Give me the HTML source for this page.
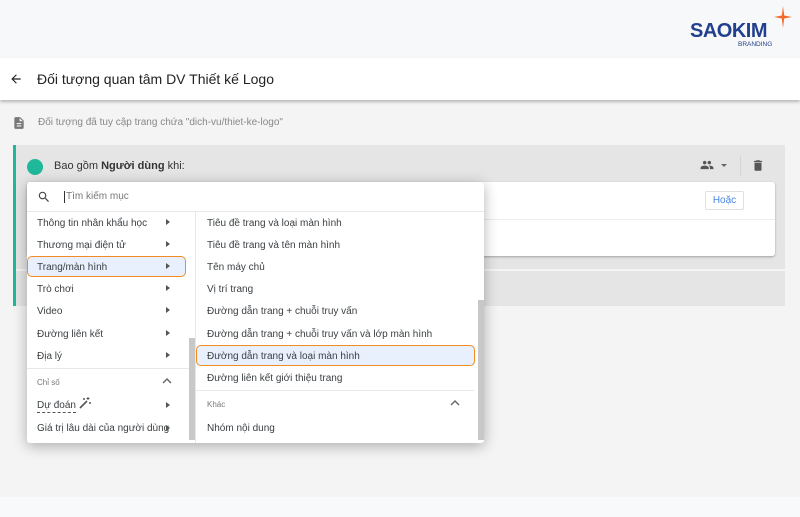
<!DOCTYPE html><html><head><meta charset="utf-8"><style>
*{margin:0;padding:0;box-sizing:border-box}
body{width:800px;height:517px;overflow:hidden;background:#f4f4f4;font-family:"Liberation Sans",Arial,sans-serif;position:relative;color:#3c4043}
.a{position:absolute}
.row{position:absolute;font-size:10px;color:#3c4043;white-space:nowrap;line-height:12px;margin-top:2px}
.tri{position:absolute;width:0;height:0;border-top:3.5px solid transparent;border-bottom:3.5px solid transparent;border-left:4px solid #555}
</style></head><body>
<div class="a" style="left:0;top:0;width:800px;height:58px;background:#f7f8f9"></div>
<div class="a" style="left:690px;top:21px;font-size:20px;line-height:20px;font-weight:bold;color:#23408e;letter-spacing:-0.5px">SAOKIM</div>
<div class="a" style="left:738px;top:41px;font-size:6.5px;color:#23408e">BRANDING</div>
<svg class="a" style="left:774px;top:6px" width="18" height="22" viewBox="0 0 18 22"><path d="M9 0 L10.2 9.5 L18 11 L10.2 12.5 L9 22 L7.8 12.5 L0 11 L7.8 9.5Z" fill="#f26b2a"/></svg>
<div class="a" style="left:0;top:58px;width:800px;height:42px;background:#fff;box-shadow:0 2px 3px rgba(0,0,0,.25)"></div>
<svg class="a" style="left:9px;top:72px" width="14" height="14" viewBox="0 0 24 24"><path d="M20 11H7.8l5.6-5.6L12 4l-8 8 8 8 1.4-1.4L7.8 13H20z" fill="#222"/></svg>
<div class="a" style="left:37px;top:71px;font-size:14px;color:#222">Đối tượng quan tâm DV Thiết kế Logo</div>
<svg class="a" style="left:12px;top:115px" width="14" height="16" viewBox="0 0 24 24"><path d="M14 2H6c-1.1 0-2 .9-2 2v16c0 1.1.9 2 2 2h12c1.1 0 2-.9 2-2V8l-6-6zm2 16H8v-2h8v2zm0-4H8v-2h8v2zm-3-5V3.5L18.5 9H13z" fill="#777"/></svg>
<div class="a" style="left:38px;top:117px;font-size:10px;color:#888">Đối tượng đã tuy cập trang chứa "dich-vu/thiet-ke-logo"</div>
<div class="a" style="left:13px;top:145px;width:772px;height:161px;background:#e5e5e5;border-left:3px solid #1fb89a"></div>
<div class="a" style="left:16px;top:269px;width:769px;height:2px;background:#f4f4f4"></div>
<div class="a" style="left:27px;top:159px;width:16px;height:16px;border-radius:50%;background:#1fb89a"></div>
<div class="a" style="left:54px;top:160px;font-size:11px;color:#333">Bao gồm <b>Người dùng</b> khi:</div>
<svg class="a" style="left:699px;top:158px" width="16" height="14" viewBox="0 0 24 24"><path d="M16 11c1.7 0 3-1.300 3-3s-1.3-3-3-3-3 1.3-3 3 1.3 3 3 3zm-8 0c1.7 0 3-1.3 3-3S9.7 5 8 5 5 6.3 5 8s1.3 3 3 3zm0 2c-2.3 0-7 1.2-7 3.5V19h14v-2.5C15 14.2 10.3 13 8 13zm8 0c-.3 0-.6 0-1 .1 1.2.8 2 2 2 3.4V19h6v-2.5c0-2.3-4.7-3.5-7-3.5z" fill="#555"/></svg>
<div class="a" style="left:721px;top:164px;border-left:3px solid transparent;border-right:3px solid transparent;border-top:3px solid #666"></div>
<div class="a" style="left:740px;top:156px;width:1px;height:20px;background:#d5d5d5"></div>
<svg class="a" style="left:751px;top:158px" width="14" height="15" viewBox="0 0 24 24"><path d="M6 19c0 1.1.9 2 2 2h8c1.1 0 2-.9 2-2V7H6v12zM19 4h-3.5l-1-1h-5l-1 1H5v2h14V4z" fill="#555"/></svg>
<div class="a" style="left:27px;top:182px;width:748px;height:74px;background:#fff;border-radius:3px;box-shadow:0 1px 2px rgba(0,0,0,.3)"></div>
<div class="a" style="left:27px;top:219px;width:748px;height:1px;background:#eee"></div>
<div class="a" style="left:705px;top:191px;width:39px;height:19px;border:1px solid #e0e0e0;border-radius:2px;font-size:10px;color:#4a86e8;text-align:center;line-height:17px;background:#fff">Hoặc</div>
<div class="a" style="left:27px;top:182px;width:457px;height:261px;background:#fff;border-radius:3px;box-shadow:0 3px 14px rgba(0,0,0,.3)"></div>
<svg class="a" style="left:37px;top:190px" width="14" height="14" viewBox="0 0 24 24"><path d="M15.5 14h-.8l-.3-.3c1-1.1 1.6-2.6 1.6-4.2a6.5 6.5 0 1 0-6.5 6.5c1.6 0 3.1-.6 4.2-1.6l.3.3v.8l5 5 1.5-1.5-5-5zm-6 0C7 14 5 12 5 9.5S7 5 9.5 5 14 7 14 9.5 12 14 9.5 14z" fill="#444"/></svg>
<div class="a" style="left:64px;top:191px;width:1px;height:12px;background:#333"></div>
<div class="a" style="left:66px;top:191px;font-size:10px;color:#777">Tìm kiếm mục</div>
<div class="a" style="left:27px;top:211px;width:457px;height:1px;background:#e8e8e8"></div>
<div class="a" style="left:195px;top:212px;width:1px;height:231px;background:#e8e8e8"></div>
<div class="a" style="left:189px;top:338px;width:6px;height:102px;background:#c8c8c8"></div>
<div class="a" style="left:478px;top:300px;width:6px;height:140px;background:#c8c8c8"></div>
<div class="a" style="left:27px;top:256px;width:159px;height:21px;background:#e8f0fe;border:1px solid #f28b22;border-radius:5px"></div>
<div class="a" style="left:196px;top:345px;width:279px;height:21px;background:#e8f0fe;border:1px solid #f28b22;border-radius:5px"></div>
<div class="row" style="left:37px;top:216px">Thông tin nhân khẩu học</div>
<div class="row" style="left:37px;top:238px">Thương mại điện tử</div>
<div class="row" style="left:37px;top:260px">Trang/màn hình</div>
<div class="row" style="left:37px;top:282px">Trò chơi</div>
<div class="row" style="left:37px;top:304px">Video</div>
<div class="row" style="left:37px;top:327px">Đường liên kết</div>
<div class="row" style="left:37px;top:349px">Địa lý</div>
<div class="a" style="left:27px;top:368px;width:162px;height:1px;background:#e8e8e8"></div>
<div class="row" style="left:37px;top:375px;font-size:8px;color:#777">Chỉ số</div>
<div class="row" style="left:37px;top:398px;border-bottom:1px dashed #555">Dự đoán</div>
<svg class="a" style="left:79px;top:397px" width="12" height="12" viewBox="0 0 12 12"><path d="M1 11L8 4" stroke="#555" stroke-width="1.6"/><path d="M9 0v3M7.5 1.5h3M11 5v2M10 6h2M5 1v2M4 2h2" stroke="#555" stroke-width="1"/></svg>
<div class="row" style="left:37px;top:421px">Giá trị lâu dài của người dùng</div>
<div class="tri" style="left:166px;top:219px"></div>
<div class="tri" style="left:166px;top:241px"></div>
<div class="tri" style="left:166px;top:263px"></div>
<div class="tri" style="left:166px;top:285px"></div>
<div class="tri" style="left:166px;top:307px"></div>
<div class="tri" style="left:166px;top:330px"></div>
<div class="tri" style="left:166px;top:352px"></div>
<div class="tri" style="left:166px;top:402px"></div>
<div class="tri" style="left:166px;top:425px"></div>
<svg class="a" style="left:162px;top:377px" width="10" height="7" viewBox="0 0 10 7"><path d="M1 6l4-4 4 4" stroke="#666" stroke-width="1.4" fill="none"/></svg>
<div class="row" style="left:207px;top:216px">Tiêu đề trang và loại màn hình</div>
<div class="row" style="left:207px;top:238px">Tiêu đề trang và tên màn hình</div>
<div class="row" style="left:207px;top:260px">Tên máy chủ</div>
<div class="row" style="left:207px;top:282px">Vị trí trang</div>
<div class="row" style="left:207px;top:304px">Đường dẫn trang + chuỗi truy vấn</div>
<div class="row" style="left:207px;top:327px">Đường dẫn trang + chuỗi truy vấn và lớp màn hình</div>
<div class="row" style="left:207px;top:349px">Đường dẫn trang và loại màn hình</div>
<div class="row" style="left:207px;top:371px">Đường liên kết giới thiệu trang</div>
<div class="a" style="left:196px;top:390px;width:278px;height:1px;background:#e8e8e8"></div>
<div class="row" style="left:207px;top:397px;font-size:8px;color:#777">Khác</div>
<svg class="a" style="left:450px;top:399px" width="10" height="7" viewBox="0 0 10 7"><path d="M1 6l4-4 4 4" stroke="#666" stroke-width="1.4" fill="none"/></svg>
<div class="row" style="left:207px;top:421px">Nhóm nội dung</div>
<div class="a" style="left:0;top:497px;width:800px;height:20px;background:#f8f9fa"></div>
</body></html>
